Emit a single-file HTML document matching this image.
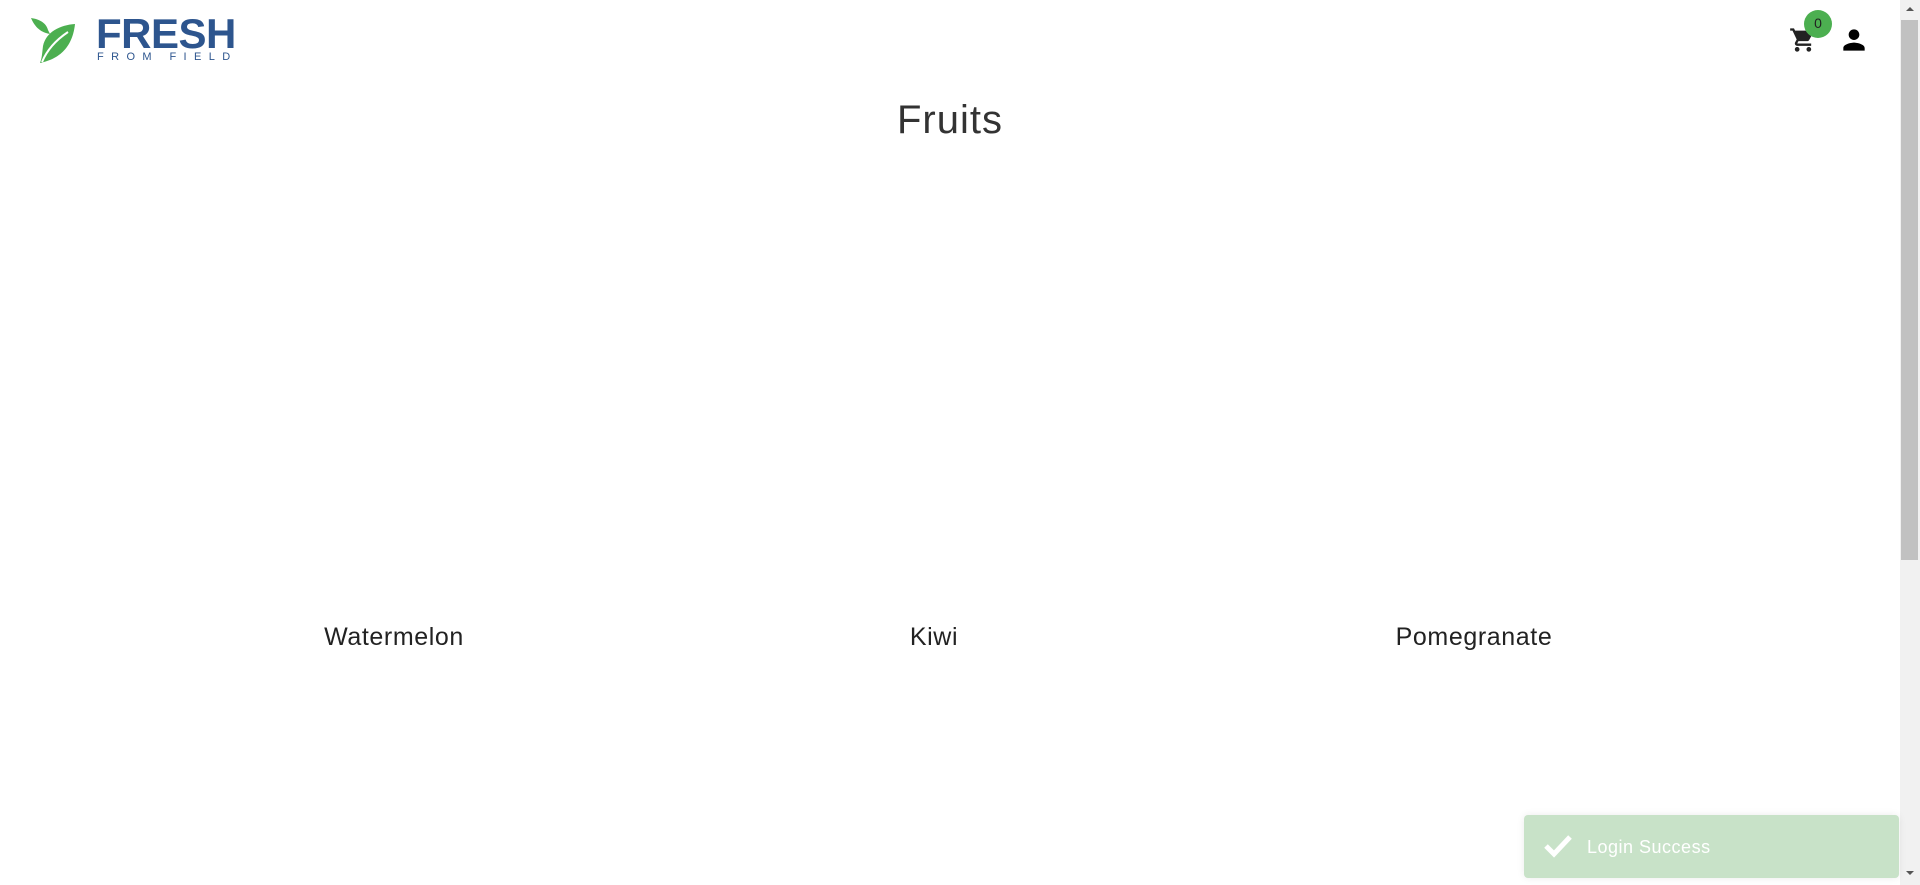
<!DOCTYPE html>
<html><head><meta charset="utf-8"><style>
html,body{margin:0;padding:0;width:1920px;height:885px;overflow:hidden;background:#fff;font-family:"Liberation Sans",sans-serif;}
.abs{position:absolute}
.lbl{position:absolute;top:623px;font-size:25px;color:#222;transform:translateX(-50%);letter-spacing:0.6px}
</style></head><body>
<svg class="abs" style="left:30px;top:16px" width="46" height="48" viewBox="0 0 46 48">
<path d="M1 2 C8 3 16 6 18 14 L20 18 C14 17 6 14 1 2Z" fill="#4caf50"/>
<path d="M45 8 C30 9 16 16 13 30 C12 38 12 42 10 47 C24 44 42 36 45 8Z" fill="#4caf50"/>
<path d="M12 46 C17 34 26 24 38 16" stroke="#fff" stroke-width="2" fill="none"/>
</svg>
<div class="abs" style="left:96px;top:10px;font-size:42px;font-weight:bold;color:#2d558e;letter-spacing:-0.5px;">FRESH</div>
<div class="abs" style="left:97px;top:51px;font-size:11px;color:#2d558e;letter-spacing:7.4px;">FROM FIELD</div>
<svg class="abs" style="left:1788px;top:26px" width="30" height="28" viewBox="0 0 24 24"><path d="M7 18c-1.1 0-2 .9-2 2s.9 2 2 2 2-.9 2-2-.9-2-2-2zM1 2v2h2l3.6 7.59-1.350 2.45c-.16.28-.25.61-.25.96 0 1.1.9 2 2 2h12v-2H7.42c-.14 0-.25-.11-.25-.25l.03-.12.9-1.63h7.45c.75 0 1.41-.41 1.75-1.03l3.58-6.490A1 1 0 0020 4H5.21l-.94-2H1zm16 16c-1.1 0-2 .9-2 2s.9 2 2 2 2-.9 2-2-.9-2-2-2z" fill="#222"/></svg>
<div class="abs" style="left:1804px;top:10px;width:28px;height:28px;border-radius:50%;background:#4caf50;color:#222;font-size:14px;text-align:center;line-height:26px;">0</div>
<svg class="abs" style="left:1838px;top:24px" width="32" height="32" viewBox="0 0 24 24"><path d="M12 12c2.21 0 4-1.790 4-4s-1.79-4-4-4-4 1.79-4 4 1.79 4 4 4zm0 2c-2.67 0-8 1.34-8 4v2h16v-2c0-2.66-5.33-4-8-4z" fill="#000"/></svg>
<div class="abs" style="left:0;width:1900px;top:98px;text-align:center;font-size:40px;color:#333;letter-spacing:1px;">Fruits</div>
<div class="lbl" style="left:394px">Watermelon</div>
<div class="lbl" style="left:934px">Kiwi</div>
<div class="lbl" style="left:1474px">Pomegranate</div>
<div class="abs" style="left:1900px;top:0;width:20px;height:885px;background:#f1f1f1"></div>
<div class="abs" style="left:1901px;top:20px;width:17px;height:540px;background:#c1c1c1"></div>
<div class="abs" style="left:1906px;top:7px;width:0;height:0;border:4px solid transparent;border-bottom-color:#555;border-top:0"></div>
<div class="abs" style="left:1906px;top:871px;width:0;height:0;border:4px solid transparent;border-top-color:#555;border-bottom:0"></div>
<div class="abs" style="left:1524px;top:815px;width:375px;height:63px;background:#c8e2c8;border-radius:4px;box-shadow:0 0 8px rgba(0,0,0,0.08)"></div>
<svg class="abs" style="left:1543px;top:834px" width="30" height="24" viewBox="0 0 30 24"><path d="M3 12 L11 20 L27 3" stroke="#fff" stroke-width="5" fill="none"/></svg>
<div class="abs" style="left:1587px;top:837px;font-size:18px;color:#fff;letter-spacing:0.5px">Login Success</div>
</body></html>
